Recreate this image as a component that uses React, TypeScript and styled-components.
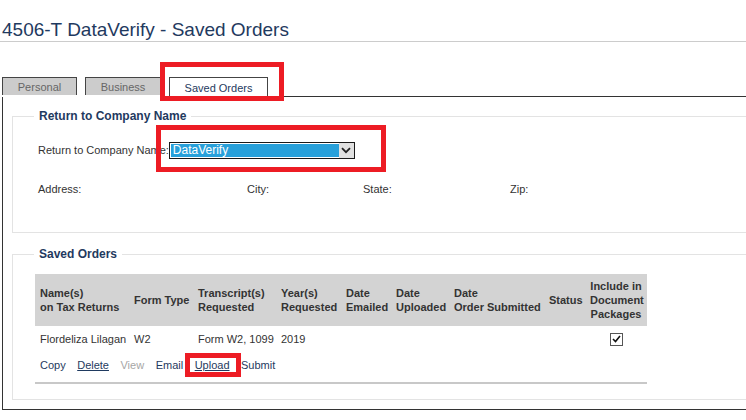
import styled, { createGlobalStyle } from "styled-components";

const NAVY = "#1f3a60";

const GlobalStyle = createGlobalStyle`
	body {
		margin: 0;
		background: #fff;
		font-family: "Liberation Sans", Arial, sans-serif;
		font-size: 11px;
		color: #333;
	}
`;

const Page = styled.div`
	position: relative;
	width: 746px;
	height: 420px;
	overflow: hidden;
`;

const Title = styled.h1`
	margin: 0;
	padding: 19px 0 0 2px;
	font-size: 19px;
	font-weight: normal;
	line-height: 22px;
	color: ${NAVY};
	border-bottom: 1px solid #cccccc;
`;

const TabRow = styled.div`
	display: flex;
	align-items: flex-end;
	margin: 34px 0 0 2px;
`;

const TabList = styled.div`
	display: flex;
	align-items: flex-end;
	gap: 8px;
`;

const Tab = styled.div<{ $active?: boolean; $width: number }>`
	box-sizing: border-box;
	width: ${(p) => p.$width}px;
	height: ${(p) => (p.$active ? 20 : 18)}px;
	margin-bottom: ${(p) => (p.$active ? 0 : 2)}px;
	padding-top: ${(p) => (p.$active ? 1 : 0)}px;
	display: flex;
	align-items: center;
	justify-content: center;
	border: 1px solid #444;
	border-bottom: none;
	background: ${(p) => (p.$active ? "#fff" : "#cccccc")};
	color: ${(p) => (p.$active ? NAVY : "#666")};
	font-size: 11px;
`;

const TabFiller = styled.div`
	flex: 1;
	height: 20px;
	border-bottom: 1px solid #333;
`;

const Panel = styled.div`
	width: 800px;
	margin-left: 2px;
	padding: 12px 9px 9px 9px;
	border: 1px solid #333;
	border-top: none;
`;

const Group = styled.fieldset<{ $gap?: number }>`
	margin: ${(p) => p.$gap ?? 0}px 0 0 0;
	padding: 0;
	min-width: 0;
	border: 1px solid #e3e3e3;
`;

const Legend = styled.legend`
	margin-left: 21px;
	padding: 0 5px;
	font-size: 12px;
	font-weight: bold;
	line-height: 14px;
	color: ${NAVY};
`;

const CompanyBody = styled.div`
	padding: 19px 0 36px 25px;
`;

const FieldRow = styled.div`
	display: flex;
	align-items: center;
	height: 17px;
	line-height: 13px;
`;

const SelectBox = styled.div`
	box-sizing: border-box;
	width: 186px;
	height: 17px;
	display: flex;
	padding: 1px 0 1px 1px;
	border: 1px solid #1a1a1a;
	background: #fff;
`;

const SelectValue = styled.div`
	flex: 1;
	padding-left: 2px;
	background: #27a0da;
	color: #fff;
	font-size: 12px;
	line-height: 13px;
`;

const SelectArrow = styled.div`
	width: 15px;
	display: flex;
	align-items: center;
	justify-content: center;
	background: #e1e1e1;
	margin-top: -1px;
	margin-bottom: -1px;
`;

const AddressRow = styled.div`
	display: grid;
	grid-template-columns: 209px 116px 147px 1fr;
	margin-top: 24px;
	line-height: 13px;
`;

const OrdersBody = styled.div`
	padding: 13px 0 15px 22px;
`;

const Table = styled.table`
	width: 612px;
	table-layout: fixed;
	border-collapse: collapse;
	border-bottom: 2px solid #c8c8c8;
`;

const HeadRow = styled.tr`
	height: 52px;
	background: #d3d3d3;
`;

const HeadCell = styled.th<{ $center?: boolean }>`
	padding: 0 5px;
	text-align: ${(p) => (p.$center ? "center" : "left")};
	vertical-align: middle;
	font-weight: bold;
	line-height: 14px;
	white-space: nowrap;
	color: #333;
`;

const DataRow = styled.tr`
	height: 26px;
`;

const Cell = styled.td<{ $center?: boolean }>`
	padding: 0 5px;
	vertical-align: middle;
	text-align: ${(p) => (p.$center ? "center" : "left")};
	white-space: nowrap;
	line-height: 13px;
`;

const ActionCell = styled.td`
	height: 26px;
	padding: 0 5px 4px 5px;
	vertical-align: middle;
`;

const Actions = styled.div`
	display: flex;
	align-items: center;
	gap: 11.5px;
	line-height: 13px;
`;

const Action = styled.span<{ $underline?: boolean; $disabled?: boolean }>`
	color: ${(p) => (p.$disabled ? "#a6a6a6" : NAVY)};
	text-decoration: ${(p) => (p.$underline ? "underline" : "none")};
`;

const Checkbox = styled.span`
	box-sizing: border-box;
	display: inline-flex;
	align-items: center;
	justify-content: center;
	width: 13px;
	height: 13px;
	border: 1px solid #555;
	background: #fff;
	vertical-align: middle;
`;

const Highlight = styled.div<{ $x: number; $y: number; $w: number; $h: number }>`
	position: absolute;
	box-sizing: border-box;
	left: ${(p) => p.$x}px;
	top: ${(p) => p.$y}px;
	width: ${(p) => p.$w}px;
	height: ${(p) => p.$h}px;
	border: 5px solid #ed1c24;
	pointer-events: none;
`;

const columns = [94, 64, 83, 65, 50, 58, 95, 41, 62];

const App = () => {
	return (
		<Page>
			<GlobalStyle />
			<Title>4506-T DataVerify - Saved Orders</Title>
			<TabRow>
				<TabList>
					<Tab $width={75}>Personal</Tab>
					<Tab $width={76}>Business</Tab>
					<Tab $width={99} $active>
						Saved Orders
					</Tab>
				</TabList>
				<TabFiller />
			</TabRow>
			<Panel>
				<Group>
					<Legend>Return to Company Name</Legend>
					<CompanyBody>
						<FieldRow>
							<span>Return to Company Name:</span>
							<SelectBox>
								<SelectValue>DataVerify</SelectValue>
								<SelectArrow>
									<svg width="10" height="7" viewBox="0 0 10 7">
										<path d="M1 1.2 L5 5.2 L9 1.2" fill="none" stroke="#222" strokeWidth="1.8" />
									</svg>
								</SelectArrow>
							</SelectBox>
						</FieldRow>
						<AddressRow>
							<span>Address:</span>
							<span>City:</span>
							<span>State:</span>
							<span>Zip:</span>
						</AddressRow>
					</CompanyBody>
				</Group>
				<Group $gap={14}>
					<Legend>Saved Orders</Legend>
					<OrdersBody>
						<Table>
							<colgroup>
								{columns.map((w, i) => (
									<col key={i} style={{ width: w }} />
								))}
							</colgroup>
							<thead>
								<HeadRow>
									<HeadCell>
										Name(s)
										<br />
										on Tax Returns
									</HeadCell>
									<HeadCell>Form Type</HeadCell>
									<HeadCell>
										Transcript(s)
										<br />
										Requested
									</HeadCell>
									<HeadCell>
										Year(s)
										<br />
										Requested
									</HeadCell>
									<HeadCell>
										Date
										<br />
										Emailed
									</HeadCell>
									<HeadCell>
										Date
										<br />
										Uploaded
									</HeadCell>
									<HeadCell>
										Date
										<br />
										Order Submitted
									</HeadCell>
									<HeadCell>Status</HeadCell>
									<HeadCell $center>
										Include in
										<br />
										Document
										<br />
										Packages
									</HeadCell>
								</HeadRow>
							</thead>
							<tbody>
								<DataRow>
									<Cell>Flordeliza Lilagan</Cell>
									<Cell>W2</Cell>
									<Cell>Form W2, 1099</Cell>
									<Cell>2019</Cell>
									<Cell />
									<Cell />
									<Cell />
									<Cell />
									<Cell $center>
										<Checkbox>
											<svg width="9" height="8" viewBox="0 0 9 8">
												<path d="M1 4 L3.5 6.5 L8 1" fill="none" stroke="#111" strokeWidth="1.6" />
											</svg>
										</Checkbox>
									</Cell>
								</DataRow>
								<tr>
									<ActionCell colSpan={9}>
										<Actions>
											<Action>Copy</Action>
											<Action $underline>Delete</Action>
											<Action $disabled>View</Action>
											<Action>Email</Action>
											<Action $underline>Upload</Action>
											<Action>Submit</Action>
										</Actions>
									</ActionCell>
								</tr>
							</tbody>
						</Table>
					</OrdersBody>
				</Group>
			</Panel>
			<Highlight $x={160} $y={62} $w={124} $h={39} />
			<Highlight $x={156} $y={125} $w={230} $h={47} />
			<Highlight $x={185} $y={353} $w={56} $h={24} />
		</Page>
	);
};

export default App;
